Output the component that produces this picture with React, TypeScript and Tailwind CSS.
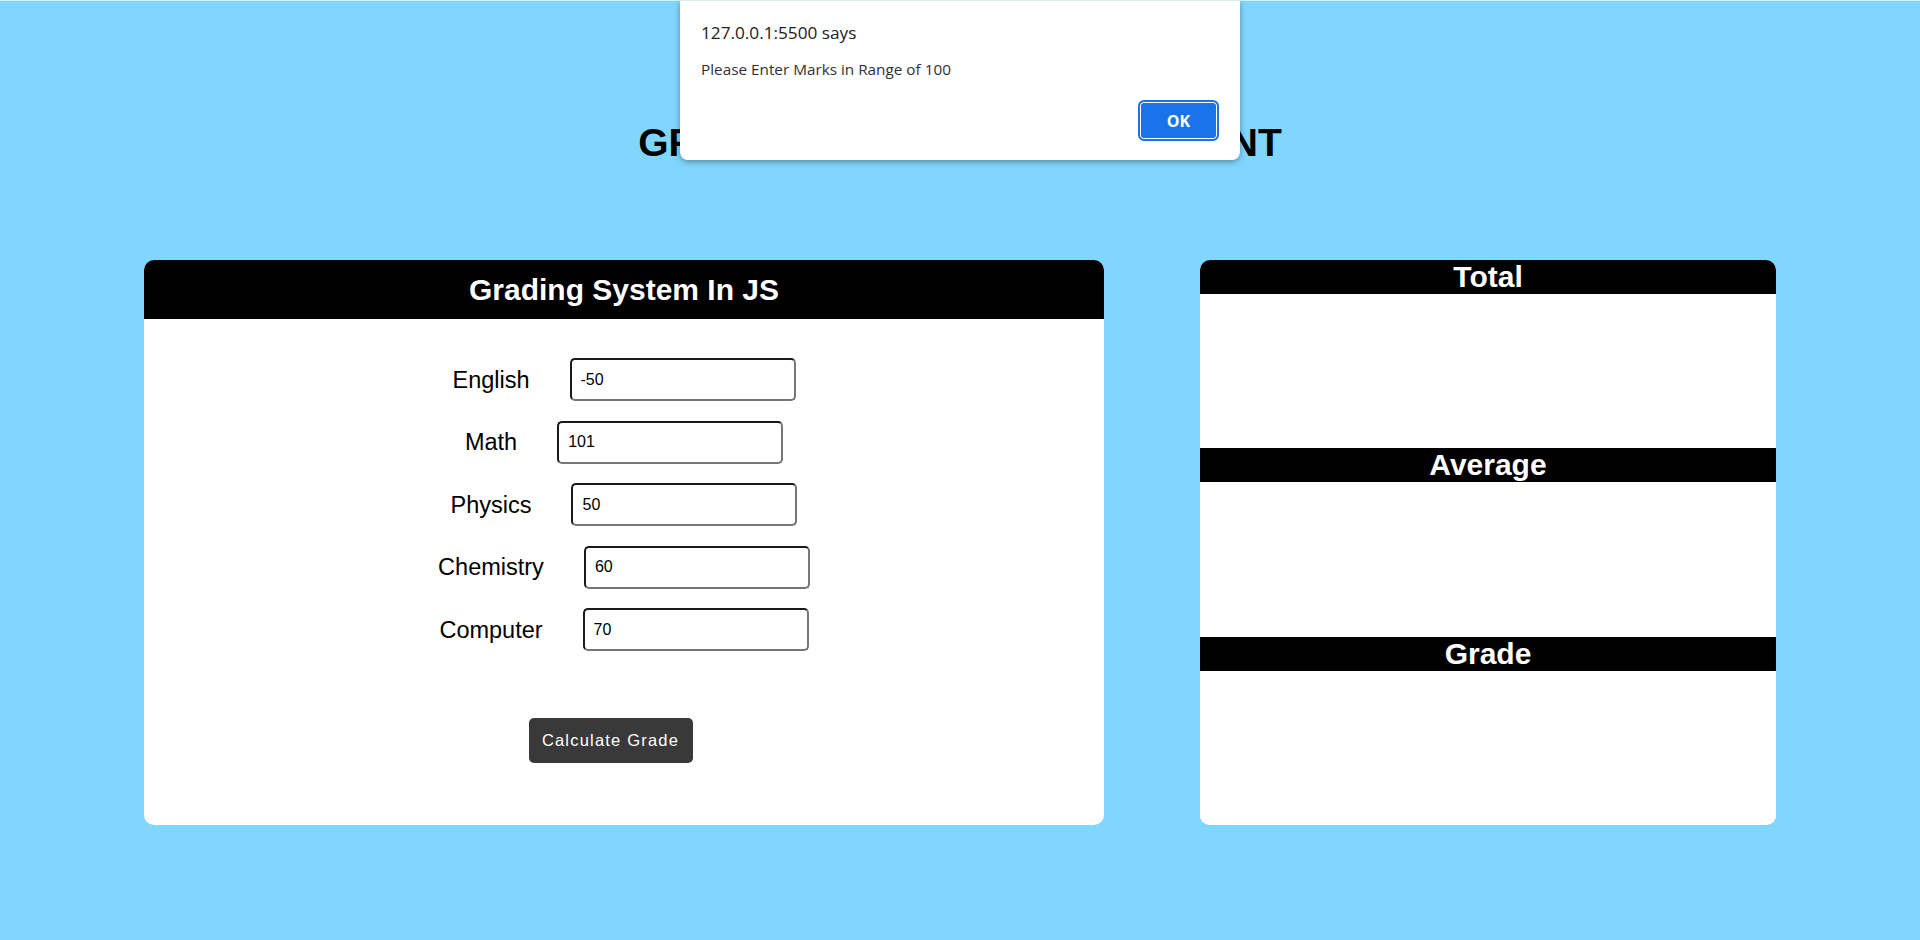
export default function App() {
  const subjects: [string, string][] = [
    ["English", "-50"],
    ["Math", "101"],
    ["Physics", "50"],
    ["Chemistry", "60"],
    ["Computer", "70"],
  ];
  const sections = ["Total", "Average", "Grade"];
  return (
    <div className="relative min-h-[940px] w-full overflow-hidden border-t border-[#d6efe4] bg-[#80d6ff] font-['Liberation_Sans',Arial,sans-serif] text-black">
      <h1 className="pt-[120px] text-center text-[39px] font-bold leading-[44px]">
        GRADING SYSTEM FOR STUDENT
      </h1>
      <div className="mt-[95px] flex gap-[96px] px-[144px]">
        <div className="flex h-[565px] w-[960px] flex-col overflow-hidden rounded-[10px] bg-white">
          <div className="flex h-[59px] items-center justify-center bg-black text-[30px] font-bold text-white">
            Grading System In JS
          </div>
          <div className="flex flex-col gap-[19.5px] pt-[39px]">
            {subjects.map(([label, value]) => (
              <div key={label} className="flex items-center justify-center gap-[40px]">
                <label className="text-[23.5px] leading-[28px]">{label}</label>
                <input
                  readOnly
                  defaultValue={value}
                  className="h-[43px] w-[226px] rounded-[5px] border-2 border-t-[#1a1a1a] border-r-[#767676] border-b-[#767676] border-l-[#1a1a1a] bg-white px-[9px] font-['Liberation_Sans',Arial,sans-serif] text-[16px] text-black outline-none"
                />
              </div>
            ))}
          </div>
          <div className="mt-[67px] flex justify-center">
            <button className="mr-[27px] flex h-[45px] w-[164px] items-center justify-center rounded-[5px] bg-[#393939] text-[16.5px] tracking-[1.2px] text-white">
              Calculate Grade
            </button>
          </div>
        </div>
        <div className="flex h-[565px] w-[576px] flex-col overflow-hidden rounded-[10px] bg-white">
          {sections.map((s) => (
            <div key={s} className="flex h-[188.33px] flex-col">
              <div className="h-[34px] bg-black text-center text-[30px] font-bold leading-[34px] text-white">
                {s}
              </div>
              <div className="flex-1 bg-white" />
            </div>
          ))}
        </div>
      </div>

      <div className="absolute left-[680px] top-0 flex h-[159px] w-[560px] flex-col rounded-b-[8px] bg-white px-[21px] font-['Open_Sans',sans-serif] shadow-[0_2px_6px_rgba(0,0,0,0.35)]">
        <div className="pt-[20px] text-[17.2px] leading-[24px] text-[#202124]">127.0.0.1:5500 says</div>
        <div className="mt-[14px] text-[15.3px] leading-[20px] text-[#303134]">
          Please Enter Marks in Range of 100
        </div>
        <div className="mt-[21px] flex justify-end">
          <button className="flex h-[41px] w-[81px] items-center justify-center rounded-[6px] border-2 border-[#1a73e8] bg-[#1a73e8] text-[16px] font-bold text-white shadow-[inset_0_0_0_1px_#ffffff]">
            OK
          </button>
        </div>
      </div>
    </div>
  );
}
